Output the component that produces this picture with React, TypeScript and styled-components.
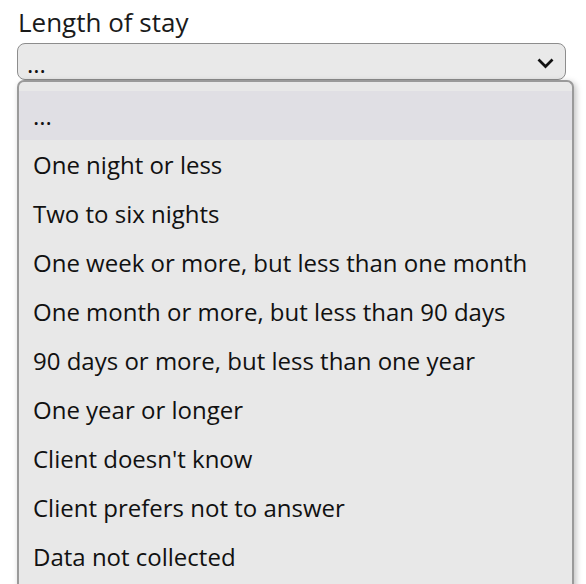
import React from "react";
import styled, { createGlobalStyle } from "styled-components";

const Global = createGlobalStyle`
  html, body { margin: 0; padding: 0; background: #ffffff; }
  body { font-family: "Open Sans", "Noto Sans", sans-serif; color: #111; }
`;

const Page = styled.div`
  position: relative;
  padding: 5px 0 0 17px;
  width: 586px;
  height: 584px;
  box-sizing: border-box;
  overflow: hidden;
`;

const Label = styled.div`
  font-size: 26px;
  line-height: 35px;
  margin: 0 0 3px 1px;
  color: #1a1a1a;
`;

const SelectBox = styled.div`
  box-sizing: border-box;
  width: 549px;
  height: 37px;
  border: 1px solid #8d8d8d;
  border-radius: 8px;
  background: #e9e9e9;
  display: flex;
  align-items: center;
  justify-content: space-between;
  padding: 0 11px 0 9px;
  font-size: 24px;
`;

const Value = styled.span`
  line-height: 33px;
  padding-top: 4px;
`;

const Menu = styled.ul`
  position: absolute;
  left: 17px;
  top: 80px;
  box-sizing: border-box;
  width: 557px;
  margin: 0;
  padding: 9px 0 0;
  list-style: none;
  background: #e8e8e8;
  border: 2px solid #9a9a9a;
  border-bottom: none;
  border-radius: 7px 7px 0 0;
  box-shadow: 2px 2px 6px rgba(0, 0, 0, 0.25);
  height: 520px;
`;

const Item = styled.li<{ $active?: boolean }>`
  height: 49px;
  display: flex;
  align-items: center;
  padding-left: 14px;
  font-size: 24px;
  background: ${(p) => (p.$active ? "#e0dfe4" : "transparent")};
  color: #111;
`;

const options = [
  "...",
  "One night or less",
  "Two to six nights",
  "One week or more, but less than one month",
  "One month or more, but less than 90 days",
  "90 days or more, but less than one year",
  "One year or longer",
  "Client doesn't know",
  "Client prefers not to answer",
  "Data not collected",
];

export default function App() {
  return (
    <>
      <Global />
      <Page>
        <Label>Length of stay</Label>
        <SelectBox>
          <Value>...</Value>
          <svg width="17" height="12" viewBox="0 0 17 12" style={{ marginTop: 2 }}>
            <path d="M1.5 2.5 L8.5 9.5 L15.5 2.5" fill="none" stroke="#111" strokeWidth="2.7" />
          </svg>
        </SelectBox>
        <Menu>
          {options.map((o, i) => (
            <Item key={o} $active={i === 0}>
              {o}
            </Item>
          ))}
        </Menu>
      </Page>
    </>
  );
}
